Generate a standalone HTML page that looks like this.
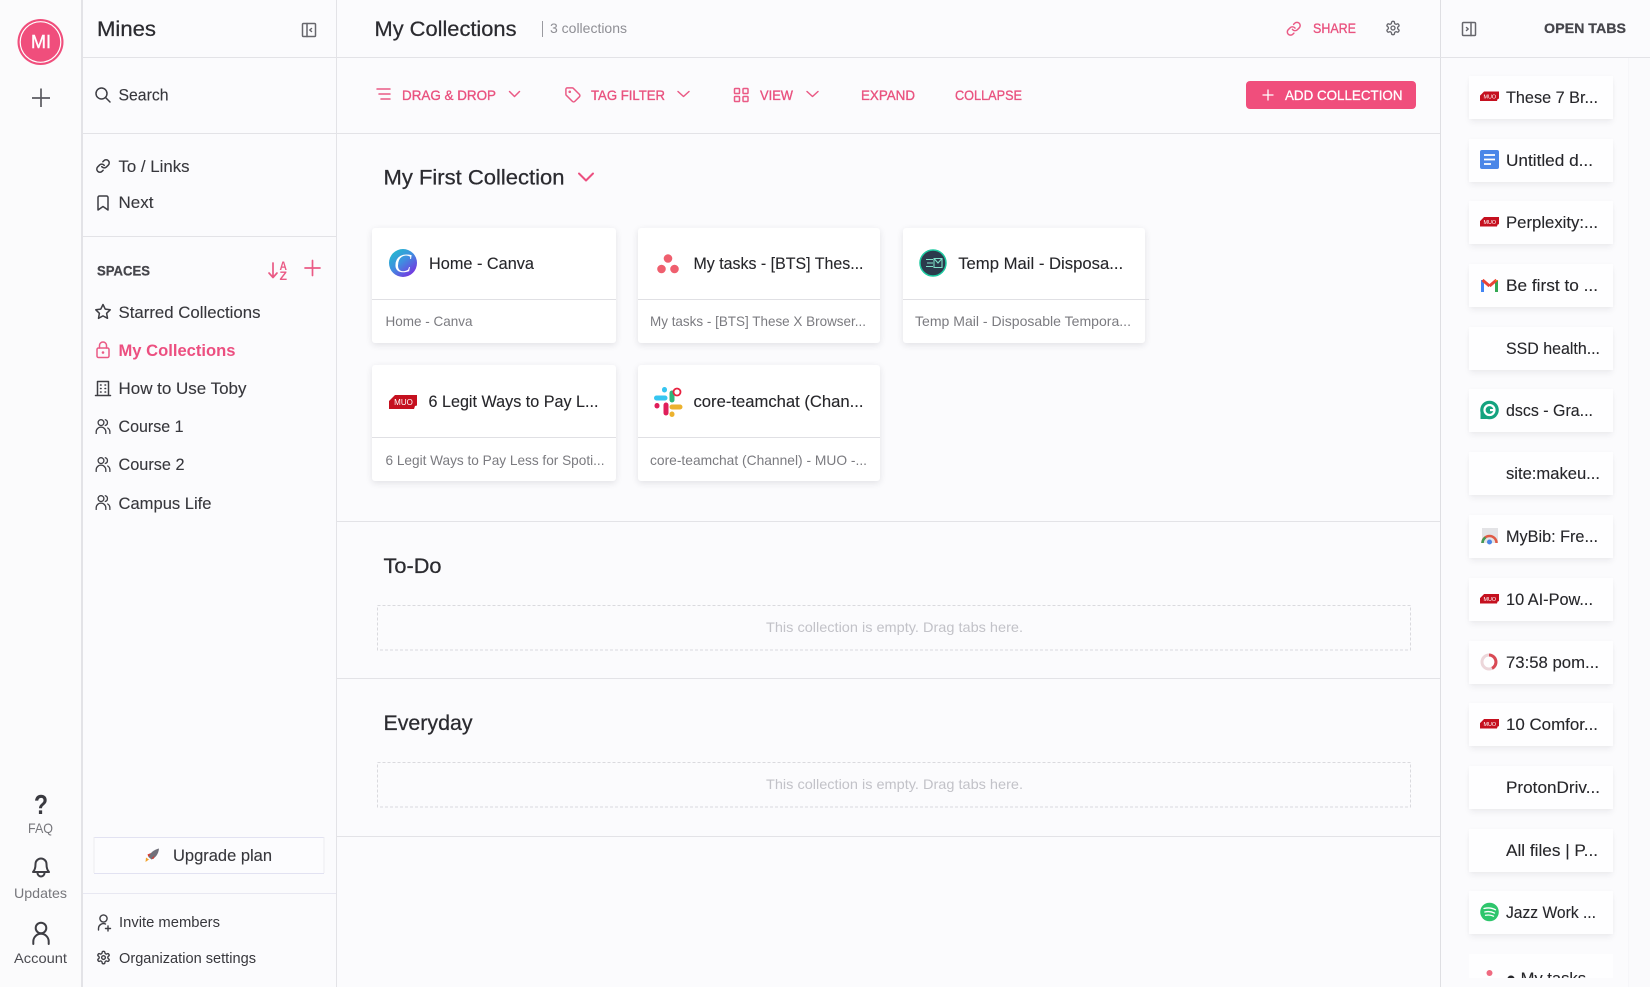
<!DOCTYPE html>
<html lang="en">
<head>
<meta charset="utf-8">
<title>My Collections</title>
<style>
html,body{margin:0;padding:0;background:#fbfbfd;width:1650px;height:987px;overflow:hidden}
.a{position:absolute}
.card{position:absolute;background:#fff;border-radius:3px;box-shadow:0 2px 7px rgba(40,40,60,.12)}
.tab{position:absolute;left:1469px;width:144px;height:43px;background:#fefeff;box-shadow:0 4px 6px -1px rgba(40,40,60,.07),0 0 4px rgba(40,40,60,.025)}
svg{position:absolute;left:0;top:0}
text{font-family:"Liberation Sans","DejaVu Sans",sans-serif;fill:#37373c}
.s{font-size:17px;stroke:#37373c;stroke-width:.12}
.h{font-size:21px;fill:#2b2b30;stroke:#2b2b30;stroke-width:.25}
.t{font-size:17px;fill:#26262a;stroke:#26262a;stroke-width:.12}
.u{font-size:14px;fill:#7b7b80}
.p{font-size:14px;fill:#e9527f;stroke:#e9527f;stroke-width:.35}
.m{font-size:14px;fill:#4a4a50}
.e{font-size:14px;fill:#c2c2c8}
.i{fill:none;stroke:#3e3e44;stroke-width:1.5;stroke-linecap:round;stroke-linejoin:round}
.k{fill:none;stroke:#ea5a85;stroke-width:1.5;stroke-linecap:round;stroke-linejoin:round}
</style>
</head>
<body>
<div class="a" style="left:0;top:0;width:81px;height:987px;background:#fbfbfc"></div>
<div class="a" style="left:1628px;top:58px;width:22px;height:929px;background:#fafafc;border-left:1px solid #f6f6f9"></div>

<div class="card" style="left:372px;top:228px;width:244px;height:115px"></div>
<div class="card" style="left:638px;top:228px;width:242px;height:115px"></div>
<div class="card" style="left:903px;top:228px;width:242px;height:115px"></div>
<div class="card" style="left:372px;top:365px;width:244px;height:116px"></div>
<div class="card" style="left:638px;top:365px;width:242px;height:116px"></div>

<div class="tab" style="top:76px"></div>
<div class="tab" style="top:139px"></div>
<div class="tab" style="top:201px"></div>
<div class="tab" style="top:264px"></div>
<div class="tab" style="top:327px"></div>
<div class="tab" style="top:389px"></div>
<div class="tab" style="top:452px"></div>
<div class="tab" style="top:515px"></div>
<div class="tab" style="top:578px"></div>
<div class="tab" style="top:641px"></div>
<div class="tab" style="top:703px"></div>
<div class="tab" style="top:766px"></div>
<div class="tab" style="top:829px"></div>
<div class="tab" style="top:891px"></div>
<div class="tab" style="top:954px;height:24px;box-shadow:none"></div>

<svg width="1650" height="987" viewBox="0 0 1650 987" xmlns="http://www.w3.org/2000/svg">
<defs>
<symbol id="link" viewBox="0 0 24 24"><path d="M10 13a5 5 0 0 0 7.54.54l3-3a5 5 0 0 0-7.07-7.07l-1.72 1.71"/><path d="M14 11a5 5 0 0 0-7.54-.54l-3 3a5 5 0 0 0 7.07 7.07l1.71-1.71"/></symbol>
<symbol id="gear" viewBox="0 0 24 24"><path d="M12.22 2h-.44a2 2 0 0 0-2 2v.18a2 2 0 0 1-1 1.73l-.43.25a2 2 0 0 1-2 0l-.15-.08a2 2 0 0 0-2.73.73l-.22.38a2 2 0 0 0 .73 2.73l.15.1a2 2 0 0 1 1 1.72v.51a2 2 0 0 1-1 1.74l-.15.09a2 2 0 0 0-.73 2.73l.22.38a2 2 0 0 0 2.73.73l.15-.08a2 2 0 0 1 2 0l.43.25a2 2 0 0 1 1 1.73V20a2 2 0 0 0 2 2h.44a2 2 0 0 0 2-2v-.18a2 2 0 0 1 1-1.73l.43-.25a2 2 0 0 1 2 0l.15.08a2 2 0 0 0 2.73-.73l.22-.39a2 2 0 0 0-.73-2.73l-.15-.08a2 2 0 0 1-1-1.74v-.5a2 2 0 0 1 1-1.74l.15-.09a2 2 0 0 0 .73-2.73l-.22-.38a2 2 0 0 0-2.73-.73l-.15.08a2 2 0 0 1-2 0l-.43-.25a2 2 0 0 1-1-1.73V4a2 2 0 0 0-2-2z"/><circle cx="12" cy="12" r="3"/></symbol>
<symbol id="ppl" viewBox="0 0 15 15"><circle cx="5.5" cy="3.6" r="2.9"/><path d="M.7 14.5v-1.6a4.8 4.8 0 0 1 9.6 0v1.6"/><path d="M9.8 .8a2.9 2.9 0 0 1 0 5.6"/><path d="M12.2 9a4.6 4.6 0 0 1 2.2 3.9v1.6"/></symbol>
<symbol id="muo" viewBox="0 0 28 14"><path d="M6 0H28V10.5L26 11 25 14H0V6Z" fill="#c5101f"/><text x="14.5" y="10" font-size="8" text-anchor="middle" style="fill:#fff">MUO</text></symbol>
</defs>

<!-- structure lines -->
<g fill="#e3e3e7">
<rect x="81" y="0" width="2" height="987"/>
<rect x="336" y="0" width="1" height="987"/>
<rect x="1440" y="0" width="1" height="987" fill="#dfdfe3"/>
<rect x="83" y="57" width="1567" height="1"/>
<rect x="83" y="133" width="1357" height="1"/>
<rect x="83" y="236" width="253" height="1"/>
<rect x="83" y="893" width="253" height="1" fill="#e8e8f2"/>
<rect x="337" y="521" width="1103" height="1"/>
<rect x="337" y="678" width="1103" height="1"/>
<rect x="337" y="836" width="1103" height="1"/>
<!-- card dividers -->
<rect x="372" y="299" width="244" height="1" fill="#e0e0e4"/>
<rect x="638" y="299" width="242" height="1" fill="#e0e0e4"/>
<rect x="903" y="299" width="246" height="1" fill="#e0e0e4"/>
<rect x="372" y="437" width="244" height="1" fill="#e0e0e4"/>
<rect x="638" y="437" width="242" height="1" fill="#e0e0e4"/>
</g>

<!-- left rail -->
<circle cx="40.5" cy="42" r="23" fill="#f04e7c"/>
<circle cx="40.5" cy="42" r="20.3" fill="none" stroke="#fff" stroke-width="1.2"/>
<text x="31" y="48" font-size="18" textLength="20" lengthAdjust="spacingAndGlyphs" style="fill:#fff;stroke:#fff;stroke-width:.4">MI</text>
<path d="M41 88.5V107M32 98H50" fill="none" stroke="#5a5a60" stroke-width="1.7"/>
<text x="34" y="814" font-size="28" font-weight="bold" textLength="14" lengthAdjust="spacingAndGlyphs" style="fill:#3a3a40">?</text>
<text x="28" y="833" class="m" textLength="25" lengthAdjust="spacingAndGlyphs" style="fill:#77777c">FAQ</text>
<path class="i" transform="translate(0,-2)" style="stroke-width:2" d="M33 874c2-2 2.500-4 2.500-8a5.500 5.500 0 0 1 11 0c0 4 .5 6 2.500 8zM37.500 875a3.500 3.500 0 0 0 7 0"/>
<text x="14" y="898" class="m" textLength="53" lengthAdjust="spacingAndGlyphs" style="fill:#77777c">Updates</text>
<circle cx="41" cy="928" r="5.300" fill="none" stroke="#3e3e44" stroke-width="2"/>
<path class="i" style="stroke-width:2" d="M33.300 944v-2.500a7.700 7.700 0 0 1 15.400 0V944"/>
<text x="14" y="963" class="m" textLength="53" lengthAdjust="spacingAndGlyphs">Account</text>

<!-- sidebar -->
<text x="97" y="36" class="h" textLength="59" lengthAdjust="spacingAndGlyphs">Mines</text>
<g class="i" style="stroke:#66666c"><rect x="302.500" y="23.500" width="13" height="13" rx="1"/><path d="M307 23.500V36.500M311.500 28.500L309.800 30 311.500 31.500"/></g>
<g transform="translate(-.5,-1)">
<g class="i"><circle cx="102" cy="94.500" r="5.500"/><path d="M106 98.500L110.500 103"/></g>
<text x="119" y="101.500" class="s" textLength="50" lengthAdjust="spacingAndGlyphs">Search</text>
<use href="#link" x="96" y="159.500" width="15" height="15" class="i" style="stroke-width:2.400"/>
<text x="119" y="173" class="s" textLength="71" lengthAdjust="spacingAndGlyphs">To / Links</text>
<path class="i" d="M98.500 198.500a1.500 1.500 0 0 1 1.500-1.500h7a1.500 1.500 0 0 1 1.500 1.500V211l-5-3.500-5 3.500z"/>
<text x="119" y="209" class="s" textLength="35" lengthAdjust="spacingAndGlyphs">Next</text>
</g>

<text x="97" y="275.500" font-size="13.500" font-weight="bold" textLength="53" lengthAdjust="spacingAndGlyphs" style="fill:#45454b;stroke:#45454b;stroke-width:.25">SPACES</text>
<path class="k" style="stroke-width:1.700" d="M273 263V277M269 273L273 277.500 277 273"/>
<text x="279.500" y="270" font-size="11.500" font-weight="bold" textLength="7.500" lengthAdjust="spacingAndGlyphs" style="fill:#ea5a85">A</text>
<text x="279.500" y="280" font-size="11.500" font-weight="bold" textLength="7.500" lengthAdjust="spacingAndGlyphs" style="fill:#ea5a85">Z</text>
<path class="k" style="stroke-width:1.700" d="M312.500 260.500V275.500M305 268H320"/>

<g transform="translate(-.5,-1)">
<path class="i" d="M103.500 305.500l2.200 4.600 5 .7-3.600 3.500.9 5-4.500-2.400-4.500 2.400.9-5-3.600-3.500 5-.7z"/>
<text x="119" y="319" class="s" textLength="142" lengthAdjust="spacingAndGlyphs">Starred Collections</text>

<g class="k"><rect x="97.500" y="349" width="12" height="9.500" rx="1.500"/><path d="M100 349v-2.500a3.500 3.500 0 0 1 7 0V349"/></g>
<circle cx="103.500" cy="353.500" r="1.300" fill="#ea5a85"/>
<text x="119" y="357" font-size="17" font-weight="bold" textLength="117" lengthAdjust="spacingAndGlyphs" style="fill:#ec4f80">My Collections</text>

<g class="i"><path d="M96 396.500H111M98 396.500V382.500H109V396.500"/><path d="M101 386h.6M105.500 386h.6M101 389.500h.6M105.500 389.500h.6M101 393h.6M105.500 393h.6"/></g>
<text x="119" y="395" class="s" textLength="128" lengthAdjust="spacingAndGlyphs">How to Use Toby</text>

<use href="#ppl" x="96" y="420" width="15" height="15" class="i" style="stroke-width:1.300"/>
<text x="119" y="433" class="s" textLength="65" lengthAdjust="spacingAndGlyphs">Course 1</text>
<use href="#ppl" x="96" y="458" width="15" height="15" class="i" style="stroke-width:1.300"/>
<text x="119" y="471" class="s" textLength="66" lengthAdjust="spacingAndGlyphs">Course 2</text>
<use href="#ppl" x="96" y="496" width="15" height="15" class="i" style="stroke-width:1.300"/>
<text x="119" y="510" class="s" textLength="93" lengthAdjust="spacingAndGlyphs">Campus Life</text>
</g>

<rect x="94" y="837" width="231" height="36" fill="#fcfcfe"/>
<path d="M94 837.500H324M94 873.500H324" stroke="#e2e2f2" fill="none"/>
<path d="M94 837V873M324 837V873" stroke="#ececf0" fill="none"/>
<g transform="translate(0,-1)">
<path d="M159 849.500C154 850.500 150 854 148.500 858L151.500 860.500C155.500 859 158.500 855 159 849.500Z" fill="#70707a"/>
<path d="M147.500 855.500L151 854 148.500 858Z" fill="#d8392f"/>
<path d="M153.500 860L154.500 856.500 151.500 859.500Z" fill="#d8392f"/>
<path d="M146 858.500L149 860.500 145.500 863Z" fill="#f2a32b"/>
<text x="173" y="862" class="s" textLength="99" lengthAdjust="spacingAndGlyphs">Upgrade plan</text>
<g class="i" style="stroke-width:1.400"><circle cx="103.500" cy="919.500" r="3.600"/><path d="M98.500 931v-1.500a5 5 0 0 1 7-4.500M108 927v5M105.500 929.500H110.500"/></g>
<text x="119" y="928" font-size="15" textLength="101" lengthAdjust="spacingAndGlyphs">Invite members</text>
</g>
<use href="#gear" x="96" y="950" width="15" height="15" class="i" style="stroke-width:2.200"/>
<text x="119" y="963" font-size="15" textLength="137" lengthAdjust="spacingAndGlyphs">Organization settings</text>

<!-- main header -->
<text x="374.500" y="36" class="h" textLength="142" lengthAdjust="spacingAndGlyphs">My Collections</text>
<g transform="translate(0,-1)">
<path d="M542.500 22V38" stroke="#9a9aa0" fill="none"/>
<text x="550" y="34" class="u" textLength="77" lengthAdjust="spacingAndGlyphs" style="fill:#8f8f95">3 collections</text>
<use href="#link" x="1286" y="22" width="15.500" height="15.500" class="k" style="stroke-width:2.300"/>
<text x="1313" y="34" class="p" textLength="43" lengthAdjust="spacingAndGlyphs">SHARE</text>
<use href="#gear" x="1385" y="21" width="16" height="16" class="i" style="stroke:#66666c;stroke-width:2"/>
<g class="i" style="stroke:#66666c"><rect x="1462.500" y="23.500" width="13" height="13" rx="1"/><path d="M1471 23.500V36.500M1466.500 28.500L1468.200 30 1466.500 31.500"/></g>
<text x="1544" y="34" font-size="14" font-weight="bold" textLength="82" lengthAdjust="spacingAndGlyphs" style="fill:#45454b;stroke:#45454b;stroke-width:.25">OPEN TABS</text>
</g>

<!-- toolbar -->
<g transform="translate(0,-1)">
<path class="k" d="M377 90H390M379 95H390M381 100H390"/>
<text x="402" y="101" class="p" textLength="94" lengthAdjust="spacingAndGlyphs">DRAG &amp; DROP</text>
<path class="k" d="M509.500 92.500L514.500 97.500 519.500 92.500"/>
<g class="k" transform="translate(564.500,87.500) scale(.7)" style="stroke-width:2.100"><path d="M12.586 2.586A2 2 0 0 0 11.172 2H4a2 2 0 0 0-2 2v7.172a2 2 0 0 0 .586 1.414l8.704 8.704a2.426 2.426 0 0 0 3.420 0l6.580-6.580a2.426 2.426 0 0 0 0-3.420z"/><circle cx="7.500" cy="7.500" r=".8"/></g>
<text x="591" y="101" class="p" textLength="74" lengthAdjust="spacingAndGlyphs">TAG FILTER</text>
<path class="k" d="M678 92.500L683.500 97.500 689 92.500"/>
<g class="k"><rect x="734.500" y="89.500" width="5" height="5" rx=".8"/><rect x="743" y="89.500" width="5" height="5" rx=".8"/><rect x="734.500" y="97.500" width="5" height="5" rx=".8"/><rect x="743" y="97.500" width="5" height="5" rx=".8"/></g>
<text x="760" y="101" class="p" textLength="33" lengthAdjust="spacingAndGlyphs">VIEW</text>
<path class="k" d="M807 92.500L812.500 97.500 818 92.500"/>
<text x="861" y="101" class="p" textLength="54" lengthAdjust="spacingAndGlyphs">EXPAND</text>
<text x="955" y="101" class="p" textLength="67" lengthAdjust="spacingAndGlyphs">COLLAPSE</text>
<rect x="1246" y="82" width="170" height="28" rx="4" fill="#f04e7c"/>
<path d="M1268 90.500V101.500M1262.500 96H1273.500" stroke="#fff" stroke-width="1.300" fill="none"/>
<text x="1285" y="101" font-size="14" textLength="117.500" lengthAdjust="spacingAndGlyphs" style="fill:#fff;stroke:#fff;stroke-width:.3">ADD COLLECTION</text>
</g>

<!-- collection 1 -->
<text x="383.500" y="184.500" class="h" textLength="181" lengthAdjust="spacingAndGlyphs">My First Collection</text>
<path class="k" style="stroke-width:2;stroke:#ec4f80" d="M579 173.500L586 180.500 593 173.500"/>

<defs><linearGradient id="cv" x1="0" y1="0" x2=".8" y2="1"><stop offset="0" stop-color="#1bc4c9"/><stop offset=".5" stop-color="#3f8fe0"/><stop offset="1" stop-color="#7a2ee0"/></linearGradient></defs>
<circle cx="403" cy="263" r="14" fill="url(#cv)"/>
<text x="394" y="272" font-size="26" font-style="italic" style="font-family:'Liberation Serif',serif;fill:#fff">C</text>
<text x="429" y="269" class="t" textLength="105" lengthAdjust="spacingAndGlyphs">Home - Canva</text>
<text x="385.500" y="326" class="u" textLength="87" lengthAdjust="spacingAndGlyphs">Home - Canva</text>

<g fill="#ef5f6e"><circle cx="668" cy="258.500" r="4.300"/><circle cx="661.500" cy="269" r="4.300"/><circle cx="674.500" cy="269" r="4.300"/></g>
<text x="693.500" y="269" class="t" textLength="170" lengthAdjust="spacingAndGlyphs">My tasks - [BTS] Thes...</text>
<text x="650" y="326" class="u" textLength="216" lengthAdjust="spacingAndGlyphs">My tasks - [BTS] These X Browser...</text>

<circle cx="933" cy="263" r="13" fill="#2b3a4c" stroke="#1dc9a0" stroke-width="1.500"/>
<path d="M926 259.500H933M927 263H933M926 266.500H933" stroke="#7fe0c8" stroke-width="1.100" fill="none"/>
<path d="M934 258.500H942V267.500H934ZM934 258.500L938 263 942 258.500" stroke="#7fe0c8" stroke-width="1.100" fill="none"/>
<text x="958.200" y="269" class="t" textLength="165" lengthAdjust="spacingAndGlyphs">Temp Mail - Disposa...</text>
<text x="915" y="326" class="u" textLength="216" lengthAdjust="spacingAndGlyphs">Temp Mail - Disposable Tempora...</text>

<use href="#muo" x="389" y="395" width="28" height="14"/>
<text x="428.500" y="407" class="t" textLength="170" lengthAdjust="spacingAndGlyphs">6 Legit Ways to Pay L...</text>
<text x="385.500" y="465" class="u" textLength="219" lengthAdjust="spacingAndGlyphs">6 Legit Ways to Pay Less for Spoti...</text>

<g fill="none" stroke-width="5" stroke-linecap="round">
<path d="M656.500 398H665" stroke="#36c5f0"/>
<path d="M664.500 389.500V390" stroke="#36c5f0"/>
<path d="M672 393V400" stroke="#2eb67d"/>
<path d="M672 407H680" stroke="#ecb22e"/>
<path d="M672 414V414.500" stroke="#ecb22e"/>
<path d="M666 405V413" stroke="#e01e5a"/>
<path d="M657 405.500V406" stroke="#e01e5a"/>
</g>
<circle cx="677" cy="392" r="3.500" fill="#fff" stroke="#e8213f" stroke-width="1.800"/>
<text x="693.500" y="407" class="t" textLength="170" lengthAdjust="spacingAndGlyphs">core-teamchat (Chan...</text>
<text x="650" y="465" class="u" textLength="217" lengthAdjust="spacingAndGlyphs">core-teamchat (Channel) - MUO -...</text>

<!-- empty collections -->
<text x="383.500" y="573" class="h" textLength="58" lengthAdjust="spacingAndGlyphs">To-Do</text>
<rect x="377.500" y="605.500" width="1033" height="44.500" fill="none" stroke="#dadade" stroke-dasharray="3 2"/>
<text x="766" y="632" class="e" textLength="257" lengthAdjust="spacingAndGlyphs">This collection is empty. Drag tabs here.</text>
<text x="383.500" y="730" class="h" textLength="89" lengthAdjust="spacingAndGlyphs">Everyday</text>
<rect x="377.500" y="762.500" width="1033" height="44.500" fill="none" stroke="#dadade" stroke-dasharray="3 2"/>
<text x="766" y="789" class="e" textLength="257" lengthAdjust="spacingAndGlyphs">This collection is empty. Drag tabs here.</text>

<!-- open tabs -->
<g transform="translate(0,-1)">
<use href="#muo" x="1480" y="92.500" width="19" height="9.500"/>
<text x="1506" y="104" class="t" textLength="92" lengthAdjust="spacingAndGlyphs">These 7 Br...</text>
<rect x="1480" y="151" width="19" height="19" rx="2" fill="#4a86e8"/>
<path d="M1484 156H1495M1484 160.500H1495M1484 165H1491" stroke="#fff" stroke-width="1.700" fill="none"/>
<text x="1506" y="167" class="t" textLength="87" lengthAdjust="spacingAndGlyphs">Untitled d...</text>
<use href="#muo" x="1480" y="218" width="19" height="9.500"/>
<text x="1506" y="229" class="t" textLength="92" lengthAdjust="spacingAndGlyphs">Perplexity:...</text>
<g fill="none" stroke-width="3">
<path d="M1482.500 293V281" stroke="#4285f4"/>
<path d="M1496.500 293V281" stroke="#34a853"/>
<path d="M1482.500 281L1489.500 287" stroke="#ea4335"/>
<path d="M1496.500 281L1489.500 287" stroke="#ea4335"/>
<path d="M1496.500 281.500V281" stroke="#fbbc05"/>
</g>
<text x="1506" y="292" class="t" textLength="92" lengthAdjust="spacingAndGlyphs">Be first to ...</text>
<text x="1506" y="355" class="t" textLength="94" lengthAdjust="spacingAndGlyphs">SSD health...</text>
<circle cx="1489.500" cy="411" r="9.300" fill="#14a37f"/>
<circle cx="1489.500" cy="411" r="5" fill="none" stroke="#fff" stroke-width="2.200"/>
<rect x="1490" y="410" width="5.500" height="2.200" fill="#fff"/>
<path d="M1480.500 420L1480.500 412 1487 420Z" fill="#14a37f"/>
<text x="1506" y="417" class="t" textLength="87" lengthAdjust="spacingAndGlyphs">dscs - Gra...</text>
<text x="1506" y="480" class="t" textLength="94" lengthAdjust="spacingAndGlyphs">site:makeu...</text>
<rect x="1482" y="529" width="16" height="15" fill="#e3e3e6"/>
<path d="M1482.500 544a7 7 0 0 1 14 0" fill="none" stroke="#e05a45" stroke-width="2.500"/>
<path d="M1482.500 544a7 7 0 0 1 3-5.500" fill="none" stroke="#3f9a55" stroke-width="2.500"/>
<circle cx="1489.500" cy="543" r="2.500" fill="#4a86e8"/>
<text x="1506" y="543" class="t" textLength="92" lengthAdjust="spacingAndGlyphs">MyBib: Fre...</text>
<use href="#muo" x="1480" y="595" width="19" height="9.500"/>
<text x="1506" y="606" class="t" textLength="87" lengthAdjust="spacingAndGlyphs">10 AI-Pow...</text>
<circle cx="1489" cy="663" r="7" fill="none" stroke="#ecd6da" stroke-width="3"/>
<path d="M1489 656a7 7 0 0 1 3 13.300" fill="none" stroke="#d94a55" stroke-width="3"/>
<text x="1506" y="669" class="t" textLength="93" lengthAdjust="spacingAndGlyphs">73:58 pom...</text>
<use href="#muo" x="1480" y="720" width="19" height="9.500"/>
<text x="1506" y="731" class="t" textLength="92" lengthAdjust="spacingAndGlyphs">10 Comfor...</text>
<text x="1506" y="794" class="t" textLength="94" lengthAdjust="spacingAndGlyphs">ProtonDriv...</text>
<text x="1506" y="857" class="t" textLength="92" lengthAdjust="spacingAndGlyphs">All files | P...</text>
<circle cx="1489.500" cy="913" r="9.300" fill="#2ec56c"/>
<path d="M1484 909.500c4-1 8-.7 11.500 1.300M1484.800 913c3.400-.8 6.600-.5 9.700 1.100M1485.500 916.300c2.800-.6 5.500-.4 8 .9" fill="none" stroke="#fff" stroke-width="1.300" stroke-linecap="round"/>
<text x="1506" y="919" class="t" textLength="90" lengthAdjust="spacingAndGlyphs">Jazz Work ...</text>
<circle cx="1489.500" cy="974" r="3" fill="#ef6a80"/>
<text x="1506" y="985" class="t" textLength="80" lengthAdjust="spacingAndGlyphs">● My tasks</text>
</g>
<rect x="1460" y="978" width="168" height="9" fill="#fbfbfd"/>
</svg>
</body>
</html>
